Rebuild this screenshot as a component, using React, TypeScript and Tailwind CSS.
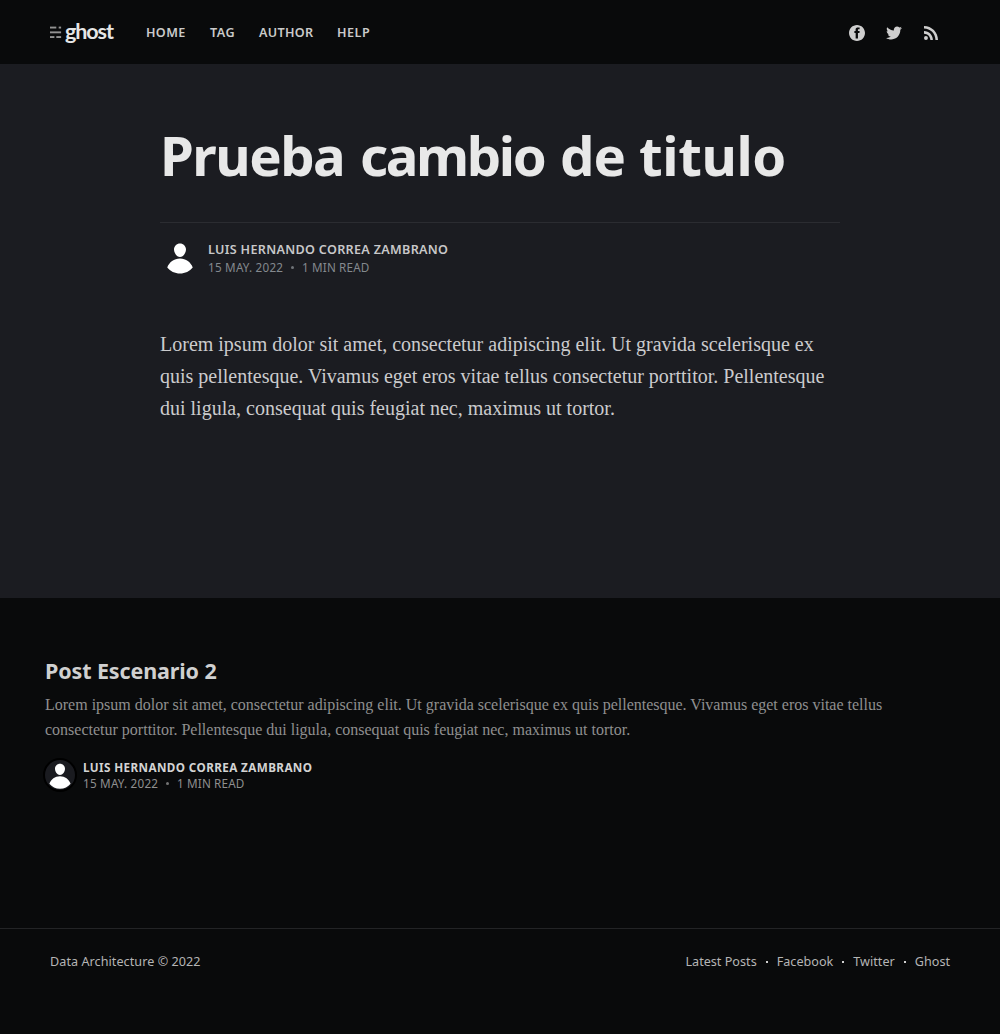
import type { ReactNode } from "react";

function Logo() {
  return (
    <div className="flex h-6 w-16 items-center">
      <svg width="12" height="12" viewBox="0 0 12 12" fill="#929292" className="shrink-0">
        <rect x="0" y="0.6" width="6.3" height="1.9" />
        <rect x="8.7" y="0.6" width="2.4" height="1.9" />
        <rect x="0" y="5.4" width="11.1" height="1.9" />
        <rect x="0" y="10.1" width="4.4" height="1.9" />
        <rect x="6.3" y="10.1" width="4.8" height="1.9" />
      </svg>
      <span className="-mt-[3px] ml-[3px] font-['Lato',sans-serif] text-[21.5px] leading-6 font-bold tracking-[-1.1px] text-[#e6e6e6]">
        ghost
      </span>
    </div>
  );
}

function Avatar({ size }: { size: number }) {
  return (
    <svg width={size} height={size} viewBox="0 0 24 24" fill="#fff" className="shrink-0">
      <path d="M3.513 18.998C4.749 15.504 8.082 13 12 13s7.251 2.504 8.487 5.998C18.47 21.442 15.417 23 12 23s-6.47-1.558-8.487-4.002zM12 12c2.21 0 4-2.79 4-5s-1.79-4-4-4-4 1.79-4 4 1.79 5 4 5z" />
    </svg>
  );
}

function Meta() {
  return (
    <>
      <span className="w-[75px] tracking-[0.218px]">15 MAY. 2022</span>
      <span className="mx-[7px] flex w-[5px] items-center justify-center">
        <i className="size-[3px] rounded-full bg-current opacity-80" />
      </span>
      <span className="tracking-[0.15px]">1 MIN READ</span>
    </>
  );
}

function Dot() {
  return <i className="mx-[9px] size-[2px] bg-[#d0d0d0]" />;
}

function FooterLink({ children }: { children: ReactNode }) {
  return <a className="whitespace-nowrap">{children}</a>;
}

export default function App() {
  return (
    <div className="flex h-[1034px] w-[1000px] flex-col overflow-hidden bg-[#090a0b] font-['Noto_Sans',sans-serif]">
      <header className="flex h-16 shrink-0 items-center justify-between pr-[62px] pl-[50px]">
        <div className="flex items-center">
          <Logo />
          <nav className="mt-[2px] ml-8 flex text-[12.6px] leading-5 font-semibold whitespace-nowrap text-[#cacaca]">
            <a className="w-[64px] tracking-[0.35px]">HOME</a>
            <a className="w-[49px] tracking-[0.5px]">TAG</a>
            <a className="w-[78px] tracking-[0.3px]">AUTHOR</a>
            <a className="tracking-[0.5px]">HELP</a>
          </nav>
        </div>
        <div className="mt-[2px] flex items-center text-[#cecece]">
          <svg width="16" height="16" viewBox="0 0 32 32" fill="currentColor">
            <path d="M16 0c8.837 0 16 7.163 16 16s-7.163 16-16 16S0 24.837 0 16 7.163 0 16 0zm5.204 4.911h-3.546c-2.103 0-4.443.885-4.443 3.934.01 1.062 0 2.08 0 3.225h-2.433v3.872h2.509v11.147h4.61v-11.22h3.042l.275-3.81h-3.397s.007-1.695 0-2.187c0-1.205 1.253-1.136 1.329-1.136h2.054V4.911z" />
          </svg>
          <svg className="ml-5" width="18" height="18" viewBox="0 0 32 32" fill="currentColor">
            <path d="M30.063 7.313c-.813 1.125-1.75 2.125-2.875 2.938v.75c0 1.563-.188 3.125-.688 4.625a15.088 15.088 0 0 1-2.063 4.438c-.875 1.438-2 2.688-3.25 3.813a15.015 15.015 0 0 1-4.625 2.563c-1.813.688-3.75 1-5.75 1-3.25 0-6.188-.875-8.875-2.625.438.063.875.125 1.375.125 2.688 0 5.063-.875 7.188-2.5-1.25 0-2.375-.375-3.375-1.125s-1.688-1.688-2.063-2.875c.438.063.813.125 1.125.125.5 0 1-.063 1.5-.25-1.313-.25-2.438-.938-3.313-1.938a5.673 5.673 0 0 1-1.313-3.688v-.063c.813.438 1.688.688 2.625.688a5.228 5.228 0 0 1-1.875-2c-.5-.875-.688-1.813-.688-2.75 0-1.063.25-2.063.75-2.938 1.438 1.75 3.188 3.188 5.25 4.25s4.313 1.688 6.688 1.813a5.579 5.579 0 0 1 1.5-5.438c1.125-1.125 2.5-1.688 4.125-1.688s3.063.625 4.188 1.813a11.48 11.48 0 0 0 3.688-1.375c-.438 1.375-1.313 2.438-2.563 3.188 1.125-.125 2.188-.438 3.313-.875z" />
          </svg>
          <svg className="ml-[21px]" width="14" height="14" viewBox="4 4.44 15.56 15.56" fill="currentColor">
            <circle cx="6.18" cy="17.82" r="2.18" />
            <path d="M4 4.44v2.83c7.03 0 12.73 5.7 12.73 12.73h2.83c0-8.59-6.97-15.56-15.56-15.56zm0 5.66v2.83c3.9 0 7.07 3.17 7.07 7.07h2.83c0-5.47-4.43-9.9-9.9-9.9z" />
          </svg>
        </div>
      </header>

      <main className="h-[534px] shrink-0 bg-[#1b1c21] px-40 pt-[59px]">
        <h1 className="flex h-16 text-[54.5px] leading-[64px] font-bold whitespace-nowrap text-[#e8e8e8]">
          <span className="w-[200px] tracking-[-1.5px]">Prueba</span>
          <span className="w-[200px] tracking-[-2.4px]">cambio</span>
          <span className="w-[79px] tracking-[-1px]">de</span>
          <span className="tracking-[-0.4px]">titulo</span>
        </h1>
        <div className="mt-[35px] flex border-t border-[#2b2c31] pt-4">
          <div className="-mt-[2px] flex size-10 items-center justify-center">
            <Avatar size={36} />
          </div>
          <div className="ml-2 text-[11.7px] leading-[18px] whitespace-nowrap text-[#84898e]">
            <div className="mt-[2px] -mb-px text-[12.6px] font-semibold tracking-[0.31px] text-[#c8c8c9]">
              LUIS HERNANDO CORREA ZAMBRANO
            </div>
            <div className="flex">
              <Meta />
            </div>
          </div>
        </div>
        <p className="mt-[51px] font-['Liberation_Serif',serif] text-xl leading-8 text-[#cbcbcd]">
          Lorem ipsum dolor sit amet, consectetur adipiscing elit. Ut gravida scelerisque ex quis pellentesque. Vivamus
          eget eros vitae tellus consectetur porttitor. Pellentesque dui ligula, consequat quis feugiat nec, maximus ut
          tortor.
        </p>
      </main>

      <section className="h-[330px] shrink-0 px-[45px] pt-[58px]">
        <h2 className="text-[21.5px] leading-[30px] font-bold tracking-[-0.12px] text-[#d0d0d0]">Post Escenario 2</h2>
        <p className="mt-[6px] w-[860px] font-['Liberation_Serif',serif] text-base leading-[25px] text-[#8f8f8f]">
          Lorem ipsum dolor sit amet, consectetur adipiscing elit. Ut gravida scelerisque ex quis pellentesque. Vivamus
          eget eros vitae tellus consectetur porttitor. Pellentesque dui ligula, consequat quis feugiat nec, maximus ut
          tortor.
        </p>
        <div className="mt-[16px] -ml-[2px] flex">
          <div className="flex size-[34px] items-center justify-center rounded-full border-2 border-black bg-[#1a1b20]">
            <Avatar size={30} />
          </div>
          <div className="ml-[6px] text-[11.7px] leading-4 whitespace-nowrap text-[#8f8f8f]">
            <div className="mt-px font-bold tracking-[0.392px] text-[#d3d3d3]">LUIS HERNANDO CORREA ZAMBRANO</div>
            <div className="flex">
              <Meta />
            </div>
          </div>
        </div>
      </section>

      <footer className="flex grow items-start justify-between border-t border-[#232426] px-[50px] pt-[23px] text-[12.6px] leading-5 text-[#b5b5b5]">
        <span className="tracking-[0.06px]">Data Architecture © 2022</span>
        <nav className="flex items-center tracking-[0.02px]">
          <FooterLink>Latest Posts</FooterLink>
          <Dot />
          <FooterLink>Facebook</FooterLink>
          <Dot />
          <FooterLink>Twitter</FooterLink>
          <Dot />
          <FooterLink>Ghost</FooterLink>
        </nav>
      </footer>
    </div>
  );
}
